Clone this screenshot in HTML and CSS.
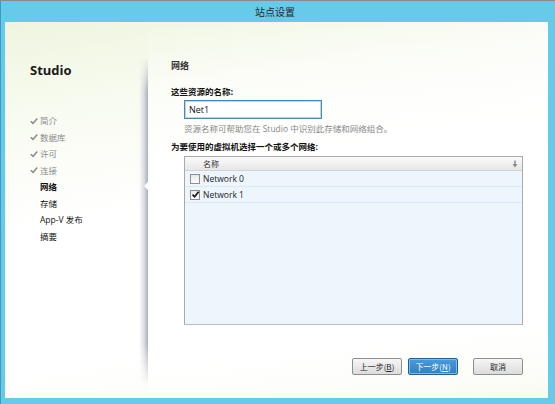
FILE: index.html
```html
<!DOCTYPE html>
<html>
<head>
<meta charset="utf-8">
<link rel="stylesheet" href="styles.css">
</head>
<body>
<div class="window">
  <div class="titlebar">站点设置</div>
  <div class="client">
    <div class="sidebar">
      <div class="brand">Studio</div>
      <ul class="nav">
        <li class="done"><svg class="chk" viewBox="0 0 8 8"><path d="M0.8 4.3 L3 6.4 L7.2 1.4" fill="none" stroke="#8a8a8a" stroke-width="1.5"/></svg>简介</li>
        <li class="done"><svg class="chk" viewBox="0 0 8 8"><path d="M0.8 4.3 L3 6.4 L7.2 1.4" fill="none" stroke="#8a8a8a" stroke-width="1.5"/></svg>数据库</li>
        <li class="done"><svg class="chk" viewBox="0 0 8 8"><path d="M0.8 4.3 L3 6.4 L7.2 1.4" fill="none" stroke="#8a8a8a" stroke-width="1.5"/></svg>许可</li>
        <li class="done"><svg class="chk" viewBox="0 0 8 8"><path d="M0.8 4.3 L3 6.4 L7.2 1.4" fill="none" stroke="#8a8a8a" stroke-width="1.5"/></svg>连接</li>
        <li class="current">网络</li>
        <li class="todo">存储</li>
        <li class="todo">App-V 发布</li>
        <li class="todo">摘要</li>
      </ul>
    </div>
    <div class="sep"><span class="notch"></span></div>
    <div class="main">
      <div class="heading">网络</div>
      <div class="label">这些资源的名称:</div>
      <div class="field"><input class="input" type="text" value="Net1"></div>
      <div class="help">资源名称可帮助您在 Studio 中识别此存储和网络组合。</div>
      <div class="label label2">为要使用的虚拟机选择一个或多个网络:</div>
      <div class="listbox">
        <div class="lhead"><span class="col">名称</span><svg class="sort" viewBox="0 0 6 8"><path d="M3 0.5 V5" stroke="#888" stroke-width="1.4"/><path d="M0.6 4 L3 7.4 L5.4 4 Z" fill="#888"/></svg></div>
        <div class="row"><span class="cb"></span>Network 0</div>
        <div class="row"><span class="cb checked"><svg viewBox="0 0 9 9"><path d="M1.5 4.6 L3.6 6.8 L7.6 1.8" fill="none" stroke="#111" stroke-width="1.6"/></svg></span>Network 1</div>
      </div>
      <div class="buttons">
        <button class="btn">上一步(<u>B</u>)</button>
        <button class="btn primary">下一步(<u>N</u>)</button>
        <button class="btn cancel">取消</button>
      </div>
    </div>
  </div>
</div>
</body>
</html>
```
FILE: styles.css
```css
html, body {
  margin: 0;
  padding: 0;
}
body {
  width: 555px;
  height: 404px;
  overflow: hidden;
  font-family: "Noto Sans CJK SC", "Open Sans", sans-serif;
}
.window {
  box-sizing: border-box;
  width: 555px;
  height: 404px;
  background: #67cae9;
  border-top: 1px solid #8a8a8a;
  border-left: 1px solid #3a9cc2;
  display: flex;
  flex-direction: column;
}
.titlebar {
  height: 21px;
  line-height: 21px;
  text-align: center;
  font-size: 10px;
  color: #1e2a30;
  padding-right: 6px;
}
.client {
  margin: 0 7px 0 4px;
  height: 376px;
  display: flex;
  background: linear-gradient(170deg, #eef5df 0%, #f8fbf0 20%, #ffffff 45%, #ffffff 75%, #f9fbf1 100%);
}
.sidebar {
  width: 138px;
  padding-left: 25px;
  box-sizing: border-box;
}
.brand {
  margin-top: 38px;
  font-family: "Open Sans", sans-serif;
  font-weight: bold;
  font-size: 13px;
  color: #1a1a1a;
  height: 20px;
  line-height: 20px;
}
.nav {
  list-style: none;
  margin: 32px 0 0 0;
  padding: 0;
}
.nav li {
  height: 16.6px;
  line-height: 16.6px;
  font-size: 8.5px;
  padding-left: 10px;
  position: relative;
  color: #222;
}
.nav li .chk {
  position: absolute;
  left: 0;
  top: 4.5px;
  width: 8px;
  height: 8px;
}
.nav li.done {
  color: #8a8a8a;
}
.nav li.current {
  font-weight: bold;
  color: #111;
}
.nav li.todo {
  color: #111;
}
.nav li:nth-child(7) {
  font-family: "Open Sans", "Noto Sans CJK SC", sans-serif;
  font-size: 8.5px;
}
.sep {
  width: 9px;
  position: relative;
  background: linear-gradient(to right, rgba(190,195,205,0) 0%, rgba(190,195,205,0.55) 55%, rgba(165,170,185,0.95) 100%);
  -webkit-mask-image: linear-gradient(to bottom, transparent 36px, #000 70px, #000 320px, transparent 364px);
  mask-image: linear-gradient(to bottom, transparent 36px, #000 70px, #000 320px, transparent 364px);
}
.notch {
  position: absolute;
  right: 0;
  top: 160px;
  width: 0;
  height: 0;
  border-top: 4px solid transparent;
  border-bottom: 4px solid transparent;
  border-right: 4px solid #fff;
}
.main {
  flex: 1;
  padding-left: 23px;
  padding-right: 25px;
  background: linear-gradient(175deg, rgba(255,255,255,0) 0%, rgba(255,255,255,0.7) 25%, #fff 40%, #fff 80%, rgba(255,255,255,0) 100%);
}
.heading {
  margin-top: 37px;
  height: 14px;
  line-height: 14px;
  font-size: 9px;
  font-weight: bold;
  color: #333;
}
.label {
  margin-top: 12px;
  height: 12px;
  line-height: 12px;
  font-size: 8.5px;
  font-weight: bold;
  color: #111;
}
.field {
  margin: 3px 0 0 13px;
  display: flex;
}
.input {
  box-sizing: border-box;
  width: 138px;
  height: 19px;
  margin: 0;
  border: 1px solid #4a86b8;
  box-shadow: inset 0 0 0 1px #b9d6ee;
  padding: 0 0 0 4px;
  font-family: "Open Sans", sans-serif;
  font-size: 9px;
  color: #111;
  background: #fff;
  outline: none;
}
.help {
  margin: 4px 0 0 13px;
  height: 12px;
  line-height: 12px;
  font-size: 8.5px;
  color: #888;
}
.help, .label2 {
  font-family: "Open Sans", "Noto Sans CJK SC", sans-serif;
}
.label2 {
  margin-top: 6px;
}
.listbox {
  margin: 3px 0 0 13px;
  width: 339px;
  height: 169px;
  box-sizing: border-box;
  border: 1px solid #a9a9a9;
  border-bottom-color: #bdbdbd;
  background: #eef6fd;
}
.lhead {
  height: 13px;
  display: flex;
  align-items: center;
  justify-content: space-between;
  background: linear-gradient(#fbfbfb, #e6e6e6);
  border-bottom: 1px solid #d4d4d4;
  font-size: 8px;
  color: #333;
  padding: 0 4px 0 18px;
}
.sort {
  width: 6px;
  height: 8px;
}
.row {
  height: 15px;
  line-height: 15px;
  border-bottom: 1px solid #dde8f0;
  display: flex;
  align-items: center;
  font-family: "Open Sans", sans-serif;
  font-size: 8.5px;
  color: #222;
  padding-left: 5px;
}
.cb {
  box-sizing: border-box;
  width: 10px;
  height: 10px;
  border: 1px solid #8e8f8f;
  background: linear-gradient(#e8e8e8, #fdfdfd);
  margin-right: 3px;
  display: flex;
}
.cb svg {
  width: 9px;
  height: 9px;
  margin: -0.5px;
}
.buttons {
  margin-top: 33px;
  display: flex;
  justify-content: flex-end;
  width: 352px;
}
.btn {
  box-sizing: border-box;
  width: 50px;
  height: 17px;
  margin: 0 0 0 6px;
  padding: 0;
  border: 1px solid #8e8f8f;
  border-radius: 2px;
  background: linear-gradient(#f6f6f6, #dcdcdc);
  font-family: "Noto Sans CJK SC", sans-serif;
  font-size: 8px;
  color: #222;
}
.btn u {
  text-decoration: underline;
}
.btn.primary {
  background: linear-gradient(#4a9bdb, #2f7fc4);
  border-color: #245f93;
  color: #fff;
  box-shadow: inset 0 0 0 1px #7dbde9;
}
.btn.cancel {
  margin-left: 15px;
}
```
